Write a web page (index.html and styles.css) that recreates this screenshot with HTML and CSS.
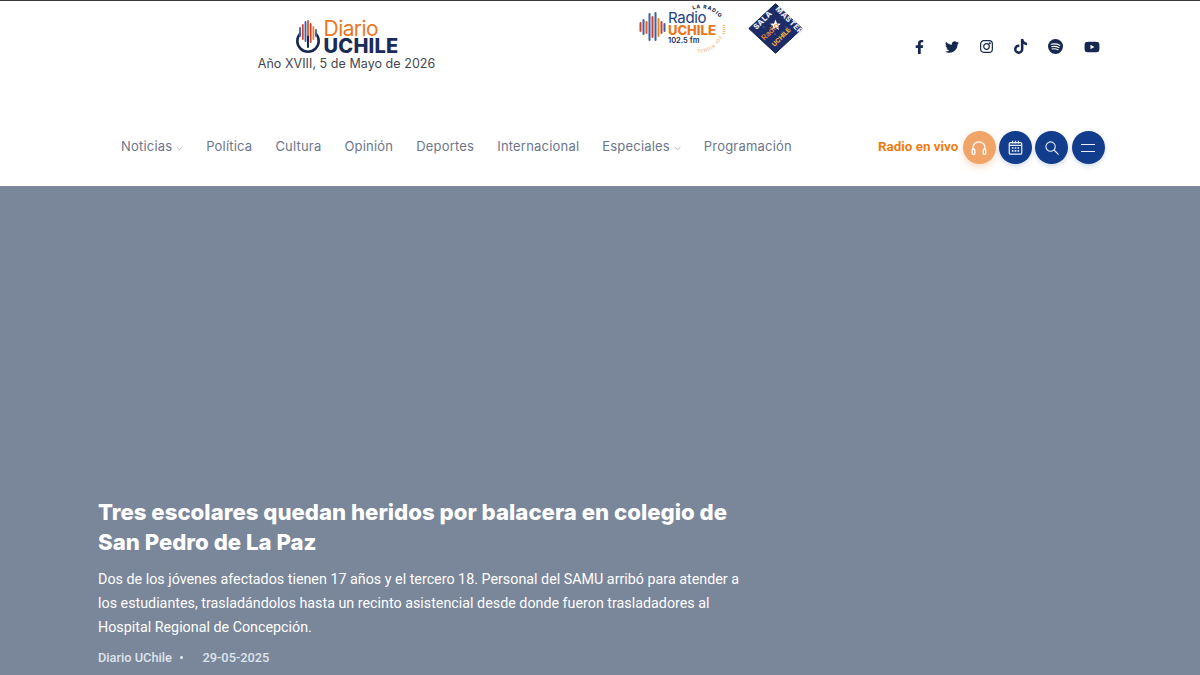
FILE: index.html
```html
<!DOCTYPE html>
<html lang="es">
<head>
<meta charset="utf-8">
<title>Diario UChile</title>
<link rel="stylesheet" href="styles.css">
</head>
<body>
<header class="site-header">
  <div class="top-row">
    <div class="brand">
      <div class="brand-logo">
        <svg class="brand-mark" viewBox="0 0 26 34" width="26" height="34" aria-hidden="true">
          <path d="M4.9 14a10.7 10.7 0 1 0 16.2 0" fill="none" stroke="#16284f" stroke-width="2.6" stroke-linecap="round"/>
          <path d="M13 16v11" stroke="#16284f" stroke-width="2" stroke-linecap="round"/>
          <g stroke-width="1.8" stroke-linecap="round">
            <path d="M5 8v8" stroke="#3f5fa8"/>
            <path d="M7.8 5v14" stroke="#c9452f"/>
            <path d="M10.5 2v19" stroke="#3f5fa8"/>
            <path d="M13 1v14" stroke="#e0582a"/>
            <path d="M15.7 4v18" stroke="#c9452f"/>
            <path d="M18.4 7v12" stroke="#e98a2b"/>
            <path d="M21 10v6" stroke="#3f5fa8"/>
          </g>
        </svg>
        <div class="brand-words">
          <span class="brand-diario">Diario</span>
          <span class="brand-uchile">UCHILE</span>
        </div>
      </div>
      <div class="brand-date">Año XVIII, 5 de Mayo de 2026</div>
    </div>

    <div class="partners">
      <div class="radio-logo">
        <svg class="radio-bars" viewBox="0 0 28 30" width="28" height="30" aria-hidden="true">
          <g stroke-width="2" stroke-linecap="round">
            <path d="M1.5 11v8" stroke="#c9452f"/>
            <path d="M4.5 8v14" stroke="#3f5fa8"/>
            <path d="M7.5 10v11" stroke="#e0582a"/>
            <path d="M10.5 2v26" stroke="#3f5fa8"/>
            <path d="M13.5 5v20" stroke="#c9452f"/>
            <path d="M16.5 1v27" stroke="#3f5fa8"/>
            <path d="M19.5 7v17" stroke="#e98a2b"/>
            <path d="M22.5 10v11" stroke="#c9452f"/>
            <path d="M25.5 12v7" stroke="#3f5fa8"/>
          </g>
        </svg>
        <div class="radio-words">
          <span class="radio-name">Radio</span>
          <span class="radio-uchile">UCHILE</span>
          <span class="radio-fm">102.5 fm</span>
        </div>
        <svg class="radio-ring" viewBox="0 0 88 52" width="88" height="52" aria-hidden="true">
          <defs>
            <path id="ring-top" d="M54 6.5A23 23 0 0 1 84 22"/>
            <path id="ring-bottom" d="M58 49.5A24 24 0 0 0 83 34"/>
          </defs>
          <text class="ring-top"><textPath href="#ring-top">LA RADIO</textPath></text>
          <text class="ring-bottom"><textPath href="#ring-bottom">TENDIA 102</textPath></text>
          <path d="M84.5 22a22 22 0 0 1 0 9" fill="none" stroke="#eebd8c" stroke-width="3" stroke-dasharray="1 1"/>
        </svg>
      </div>
      <svg class="sala-logo" viewBox="0 0 55 51" width="55" height="51" aria-hidden="true">
        <path d="M27.5.7 54.2 25.5 27.5 50.3.8 25.5Z" fill="#1d2c66" stroke="#141f4a"/>
        <path d="M27.5 16.5 29 20.5 33 20.7 29.9 23.1 31 27 27.5 24.8 24 27 25.1 23.1 22 20.7 26 20.5Z" fill="#fff"/>
        <text class="sala-word" transform="translate(8.5 27) rotate(-45)">SALA</text>
        <text class="sala-word" transform="translate(27 6.5) rotate(45)">MASTER</text>
        <text class="sala-radio" transform="translate(16.5 38) rotate(-45)">Radio</text>
        <text class="sala-uchile" transform="translate(26.5 44) rotate(-45)">UCHILE</text>
        <g fill="#8f9ed2">
          <circle cx="16" cy="24" r=".6"/><circle cx="20" cy="30" r=".6"/><circle cx="27" cy="31" r=".6"/>
          <circle cx="34" cy="29" r=".6"/><circle cx="38" cy="24" r=".6"/><circle cx="42" cy="26" r=".6"/>
        </g>
      </svg>
    </div>

    <div class="social">
      <svg class="social-icon" viewBox="0 0 320 512" width="9" height="14" aria-hidden="true"><path d="M279.14 288l14.22-92.66h-88.91v-60.13c0-25.35 12.42-50.06 52.24-50.06h40.42V6.26S260.43 0 225.36 0c-73.22 0-121.08 44.38-121.08 124.72v70.62H22.89V288h81.39v224h100.17V288z"/></svg>
      <svg class="social-icon" viewBox="0 0 512 512" width="14" height="14" aria-hidden="true"><path d="M459.37 151.716c.325 4.548.325 9.097.325 13.645 0 138.72-105.583 298.558-298.558 298.558-59.452 0-114.68-17.219-161.137-47.106 8.447.974 16.568 1.299 25.34 1.299 49.055 0 94.213-16.568 130.274-44.832-46.132-.975-84.792-31.188-98.112-72.772 6.498.974 12.995 1.624 19.818 1.624 9.421 0 18.843-1.3 27.614-3.573-48.081-9.747-84.143-51.98-84.143-102.985v-1.299c13.969 7.797 30.214 12.67 47.431 13.319-28.264-18.843-46.781-51.005-46.781-87.391 0-19.492 5.197-37.36 14.294-52.954 51.655 63.675 129.3 105.258 216.365 109.807-1.624-7.797-2.599-15.918-2.599-24.04 0-57.828 46.782-104.934 104.934-104.934 30.213 0 57.502 12.67 76.67 33.137 23.715-4.548 46.456-13.32 66.599-25.34-7.798 24.366-24.366 44.833-46.132 57.827 21.117-2.273 41.584-8.122 60.426-16.243-14.292 20.791-32.161 39.308-52.628 54.253z"/></svg>
      <svg class="social-icon line" viewBox="0 0 14 14" width="13" height="13" aria-hidden="true"><rect x=".7" y=".7" width="12.6" height="12.6" rx="3.4"/><circle cx="7" cy="7" r="3"/><circle cx="10.5" cy="3.5" r=".5"/></svg>
      <svg class="social-icon" viewBox="0 0 448 512" width="13" height="15" aria-hidden="true"><path d="M448,209.91a210.06,210.06,0,0,1-122.77-39.25V349.38A162.55,162.55,0,1,1,185,188.31V278.2a74.62,74.62,0,1,0,52.23,71.18V0l88,0a121.18,121.18,0,0,0,1.86,22.17h0A122.18,122.18,0,0,0,381,102.39a121.43,121.43,0,0,0,67,20.14Z"/></svg>
      <svg class="social-icon" viewBox="0 0 14 14" width="15" height="15" aria-hidden="true"><circle cx="7" cy="7" r="7"/><path d="M3 4.9c2.7-.7 5.4-.4 8 .9M3.4 7.2c2.3-.6 4.6-.3 6.8.8M3.8 9.3c1.9-.4 3.8-.2 5.6.7" fill="none" stroke="#fff" stroke-width="1.1" stroke-linecap="round"/></svg>
      <svg class="social-icon" viewBox="0 0 576 512" width="16" height="14" aria-hidden="true"><path d="M549.655 124.083c-6.281-23.65-24.787-42.276-48.284-48.597C458.781 64 288 64 288 64S117.22 64 74.629 75.486c-23.497 6.322-42.003 24.947-48.284 48.597-11.412 42.867-11.412 132.305-11.412 132.305s0 89.438 11.412 132.305c6.281 23.65 24.787 41.5 48.284 47.821C117.22 448 288 448 288 448s170.78 0 213.371-11.486c23.497-6.321 42.003-24.171 48.284-47.821 11.412-42.867 11.412-132.305 11.412-132.305s0-89.438-11.412-132.305zm-317.51 213.508V175.185l142.739 81.205-142.739 81.201z"/></svg>
    </div>
  </div>

  <div class="nav-row">
    <nav class="main-nav">
      <a class="nav-link">Noticias <svg class="chev" viewBox="0 0 8 5" width="7" height="5" aria-hidden="true"><path d="M.7.8 4 4 7.3.8"/></svg></a>
      <a class="nav-link">Política</a>
      <a class="nav-link">Cultura</a>
      <a class="nav-link">Opinión</a>
      <a class="nav-link">Deportes</a>
      <a class="nav-link">Internacional</a>
      <a class="nav-link">Especiales <svg class="chev" viewBox="0 0 8 5" width="7" height="5" aria-hidden="true"><path d="M.7.8 4 4 7.3.8"/></svg></a>
      <a class="nav-link">Programación</a>
    </nav>
    <div class="actions">
      <span class="live-label">Radio en vivo</span>
      <button class="round-btn live-btn" type="button" aria-label="Radio en vivo">
        <svg viewBox="0 0 16 16" width="16" height="16" aria-hidden="true"><path d="M2 10V7.8a6 6 0 0 1 12 0V10"/><rect x="1.2" y="9" width="2.6" height="5.4" rx="1.2"/><rect x="12.2" y="9" width="2.6" height="5.4" rx="1.2"/></svg>
      </button>
      <button class="round-btn" type="button" aria-label="Calendario">
        <svg class="cal" viewBox="0 0 18 18" width="15" height="15" aria-hidden="true"><rect x="1.5" y="3" width="15" height="14" rx="1.5"/><path d="M5.5 .8v3.4M9 .8v3.4M12.5 .8v3.4M1.5 6.5h15"/><path class="dots" d="M4.6 9.6h2M8 9.6h2M11.4 9.6h2M4.6 13h2M8 13h2M11.4 13h2"/></svg>
      </button>
      <button class="round-btn" type="button" aria-label="Buscar">
        <svg viewBox="0 0 14 14" width="14" height="14" aria-hidden="true"><circle cx="5.6" cy="5.6" r="4.7"/><path d="M9 9l4.6 4.6"/></svg>
      </button>
      <button class="round-btn" type="button" aria-label="Menú">
        <svg viewBox="0 0 14 8" width="14" height="8" aria-hidden="true"><path d="M0 .5h14M0 7.5h14"/></svg>
      </button>
    </div>
  </div>
</header>

<main class="hero">
  <article class="hero-copy">
    <h1 class="hero-title">Tres escolares quedan heridos por balacera en colegio de San Pedro de La Paz</h1>
    <p class="hero-text">Dos de los jóvenes afectados tienen 17 años y el tercero 18. Personal del SAMU arribó para atender a los estudiantes, trasladándolos hasta un recinto asistencial desde donde fueron trasladadores al Hospital Regional de Concepción.</p>
    <div class="hero-meta"><span>Diario UChile</span><span class="meta-dot"></span><span>29-05-2025</span></div>
  </article>
</main>
</body>
</html>
```

FILE: styles.css
```css
* { box-sizing: border-box; }
html, body { margin: 0; height: 100%; }
body {
  height: 675px;
  overflow: hidden;
  display: flex;
  flex-direction: column;
  background: #fff;
  font-family: "Roboto", sans-serif;
}
.site-header {
  height: 186px;
  flex: none;
  background: #fff;
  border-top: 1px solid #3a3a3a;
  display: flex;
  flex-direction: column;
}
.top-row {
  height: 84px;
  flex: none;
  display: flex;
  align-items: flex-start;
}
.brand {
  margin-left: 258px;
  width: 177px;
  padding-top: 19px;
  display: flex;
  flex-direction: column;
  align-items: center;
}
.brand-logo { display: flex; align-items: flex-start; height: 35px; gap: 3px; }
.brand-mark { flex: none; }
.brand-words { display: flex; flex-direction: column; }
.brand-diario {
  font: 400 21px/18px "Inter", sans-serif;
  letter-spacing: -.6px;
  color: #e8791f;
}
.brand-uchile {
  font: 800 20px/17px "Inter", sans-serif;
  letter-spacing: .2px;
  color: #1a2b57;
}
.brand-date {
  margin-top: 0;
  font: 400 12.5px/18px "Inter", sans-serif;
  color: #44474f;
  white-space: nowrap;
  letter-spacing: .05px;
}
.partners {
  margin-left: 204px;
  padding-top: 2px;
  display: flex;
  align-items: flex-start;
  gap: 21px;
}
.radio-logo { width: 88px; height: 52px; display: flex; align-items: center; position: relative; }
.radio-bars { flex: none; margin-top: -4px; }
.radio-words { display: flex; flex-direction: column; margin-left: 1px; margin-top: -2px; }
.radio-name { font: 400 15px/14px "Inter", sans-serif; letter-spacing: -.3px; color: #23407f; }
.radio-uchile { font: 800 13px/11px "Inter", sans-serif; color: #e8791f; }
.radio-fm { font: 600 7.5px/9px "Inter", sans-serif; color: #1a2b57; }
.radio-ring { position: absolute; left: 0; top: 0; }
.ring-top { font: 800 5px "Inter", sans-serif; letter-spacing: .8px; fill: #1a2b57; }
.ring-bottom { font: 600 4.6px "Inter", sans-serif; letter-spacing: .6px; fill: #eebd8c; }
.sala-logo { flex: none; }
.sala-word { font: 800 7.6px "Inter", sans-serif; letter-spacing: .5px; fill: #e6e9f5; }
.sala-radio { font: 500 8px "Inter", sans-serif; fill: #ee8a3c; }
.sala-uchile { font: 800 6.4px "Inter", sans-serif; fill: #eeb13c; }
.social {
  margin-left: 112px;
  padding-top: 38px;
  display: flex;
  gap: 21px;
  align-items: center;
}
.social-icon { fill: #16284f; display: block; flex: none; }
.social-icon.line { fill: none; stroke: #16284f; stroke-width: 1.3; }
.nav-row {
  height: 101px;
  padding-top: 46px;
  display: flex;
  align-items: flex-start;
}
.main-nav {
  margin-left: 121px;
  width: 757px;
  height: 30px;
  display: flex;
  align-items: center;
  gap: 23px;
}
.nav-link {
  font: 400 13px/20px "Inter", sans-serif;
  color: #6c768b;
  white-space: nowrap;
  letter-spacing: .2px;
}
.chev { fill: none; stroke: #9aa1b0; stroke-width: .9; }
.actions { display: flex; align-items: center; gap: 3.3px; }
.live-label {
  font: 700 13.4px/20px "Roboto", sans-serif;
  color: #ee7d11;
  white-space: nowrap;
  margin-right: 1px;
  margin-bottom: 2px;
}
.round-btn {
  width: 33px;
  height: 33px;
  padding: 0;
  border: 0;
  border-radius: 50%;
  background: #123c8c;
  display: flex;
  align-items: center;
  justify-content: center;
  box-shadow: 0 2px 5px rgba(18, 60, 140, .2);
}
.round-btn svg { fill: none; stroke: #e8edf7; stroke-width: 1.1; }
.round-btn .cal { stroke-width: 1.5; }
.round-btn .dots { stroke-width: 2; }
.live-btn { background: #f0a468; box-shadow: 0 3px 7px rgba(240, 150, 90, .35); }
.live-btn svg { stroke: #fff; stroke-width: 1.3; }
.hero {
  flex: 1;
  background: #7a8699;
  padding: 0 0 5px 98px;
  display: flex;
  flex-direction: column;
  justify-content: flex-end;
}
.hero-copy { width: 650px; }
.hero-title {
  margin: 0;
  max-width: 640px;
  font: 800 22.2px/30px "Inter", sans-serif;
  color: #fff;
}
.hero-text {
  margin: 10px 0 0;
  font: 400 14.3px/24px "Roboto", sans-serif;
  color: #fff;
}
.hero-meta {
  margin-top: 6.5px;
  height: 25px;
  display: flex;
  align-items: center;
  font: 500 12.8px/20px "Roboto", sans-serif;
  color: #dfe4ec;
}
.meta-dot {
  width: 3px;
  height: 3px;
  border-radius: 50%;
  background: #e8ecf2;
  margin: 0 19.5px 0 8px;
}
```
